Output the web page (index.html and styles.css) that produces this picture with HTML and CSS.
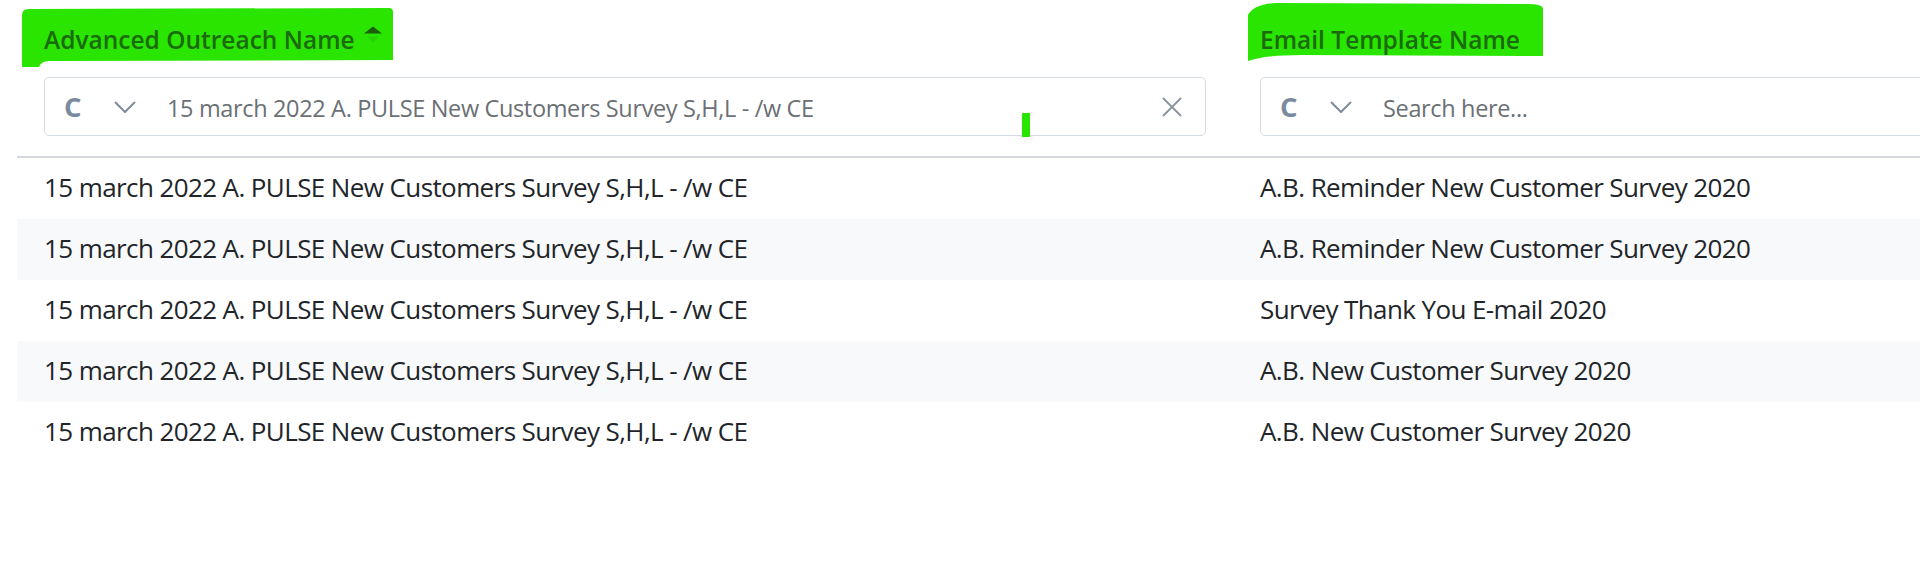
FILE: index.html
```html
<!DOCTYPE html>
<html lang="en">
<head>
<meta charset="utf-8">
<title>Advanced Outreach</title>
<link rel="stylesheet" href="styles.css">
</head>
<body>
<div class="grid">
  <div class="th">
    <svg class="marker marker-1" viewBox="22 8 372 60" width="372" height="60" aria-hidden="true">
      <path d="M22,15 Q22,9 29,9 L389,8 Q393,8 393,12 L393,60 L49,61 Q41,61 39,67 L22,67 Z" fill="#29e500"/>
    </svg>
    <div class="th-label">
      <span>Advanced Outreach Name</span>
      <svg class="sort" viewBox="0 0 20 34" width="20" height="34" aria-hidden="true">
        <polygon points="1,10.5 10,3.5 19,10.5" fill="#1a5e0c"/>
        <polygon points="4,13.5 10,19.5 16,13.5" fill="#1a5e0c" opacity="0.12"/>
      </svg>
    </div>
    <div class="filter">
      <span class="mode">C</span>
      <svg class="chevron" viewBox="0 0 22 12" width="22" height="12" aria-hidden="true">
        <polyline points="1,1 11,11 21,1" fill="none" stroke="#7d8b9c" stroke-width="2"/>
      </svg>
      <span class="filter-value">15 march 2022 A. PULSE New Customers Survey S,H,L - /w CE</span>
      <svg class="clear" viewBox="0 0 20 20" width="20" height="20" aria-hidden="true">
        <path d="M1,1 L19,19 M19,1 L1,19" stroke="#8893a2" stroke-width="1.8" fill="none"/>
      </svg>
    </div>
    <span class="mark-bar"></span>
  </div>
  <div class="th">
    <svg class="marker marker-2" viewBox="1248 2 296 60" width="296" height="60" aria-hidden="true">
      <path d="M1248,15 Q1254,4 1276,3 L1527,4 Q1543,4 1543,9 L1543,56 L1302,55 Q1266,55 1248,61 Z" fill="#29e500"/>
    </svg>
    <div class="th-label">
      <span>Email Template Name</span>
    </div>
    <div class="filter filter-open">
      <span class="mode">C</span>
      <svg class="chevron" viewBox="0 0 22 12" width="22" height="12" aria-hidden="true">
        <polyline points="1,1 11,11 21,1" fill="none" stroke="#7d8b9c" stroke-width="2"/>
      </svg>
      <span class="filter-value">Search here...</span>
    </div>
  </div>

  <div class="td">15 march 2022 A. PULSE New Customers Survey S,H,L - /w CE</div>
  <div class="td">A.B. Reminder New Customer Survey 2020</div>

  <div class="td striped">15 march 2022 A. PULSE New Customers Survey S,H,L - /w CE</div>
  <div class="td striped">A.B. Reminder New Customer Survey 2020</div>

  <div class="td">15 march 2022 A. PULSE New Customers Survey S,H,L - /w CE</div>
  <div class="td">Survey Thank You E-mail 2020</div>

  <div class="td striped">15 march 2022 A. PULSE New Customers Survey S,H,L - /w CE</div>
  <div class="td striped">A.B. New Customer Survey 2020</div>

  <div class="td">15 march 2022 A. PULSE New Customers Survey S,H,L - /w CE</div>
  <div class="td">A.B. New Customer Survey 2020</div>
</div>
</body>
</html>
```

FILE: styles.css
```css
html, body {
  margin: 0;
  padding: 0;
  background: #ffffff;
  overflow: hidden;
}

body {
  font-family: "Open Sans", "Noto Sans", "Liberation Sans", sans-serif;
  color: #212529;
}

.grid {
  display: grid;
  grid-template-columns: 1216px 1216px;
  margin-left: 17px;
  width: 2432px;
}

.th {
  position: relative;
  padding: 23px 27px 20px 27px;
  border-bottom: 2px solid #d4d7db;
}

.marker {
  position: absolute;
  z-index: 0;
}

.marker-1 {
  left: 5px;
  top: 8px;
}

.marker-2 {
  left: 15px;
  top: 2px;
}

.th-label {
  position: relative;
  z-index: 1;
  display: flex;
  align-items: flex-start;
  gap: 8px;
  height: 34px;
  line-height: 34px;
  font-size: 24.5px;
  font-weight: 600;
  color: #1b6a0e;
  white-space: nowrap;
}

.sort {
  display: block;
}

.filter {
  position: relative;
  z-index: 1;
  display: flex;
  align-items: center;
  box-sizing: border-box;
  height: 59px;
  margin-top: 20px;
  padding: 0 23px 0 19px;
  border: 1px solid #d6dce5;
  border-radius: 5px;
  background: #ffffff;
}

.filter-open {
  width: 1400px;
}

.mode {
  width: 50px;
  font-size: 27.5px;
  font-weight: 700;
  color: #7a8b9f;
  line-height: 1;
}

.chevron {
  display: block;
  flex: none;
  margin-right: 31px;
}

.filter-value {
  flex: 1;
  font-size: 23.5px;
  letter-spacing: -0.35px;
  color: #6b7075;
  white-space: nowrap;
  padding-top: 2px;
}

.clear {
  display: block;
  flex: none;
}

.mark-bar {
  position: absolute;
  left: 1005px;
  top: 113px;
  width: 8px;
  height: 24px;
  background: #29e500;
  z-index: 2;
}

.td {
  display: flex;
  align-items: center;
  box-sizing: border-box;
  height: 61px;
  padding: 0 27px 3px 27px;
  font-size: 26px;
  letter-spacing: -0.6px;
  color: #212529;
  white-space: nowrap;
}

.striped {
  background: #f8f9fa;
}
```
